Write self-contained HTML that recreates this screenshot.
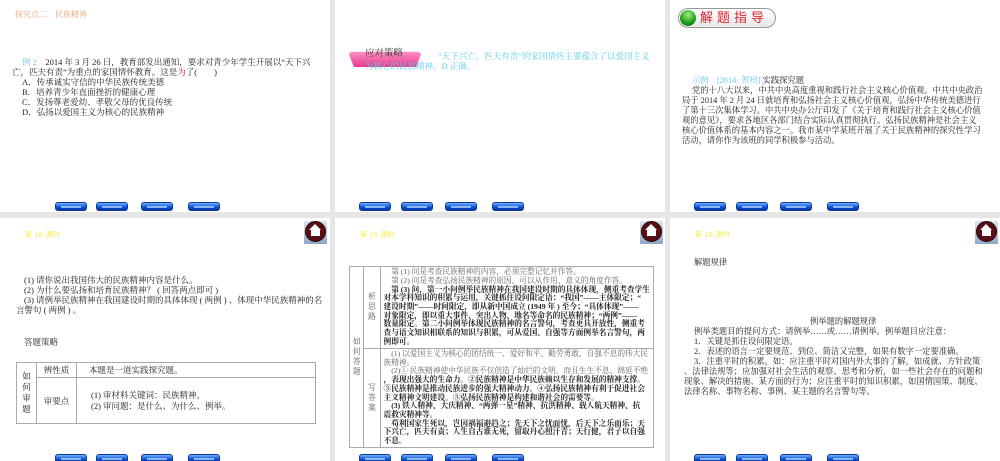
<!DOCTYPE html>
<html><head><meta charset="utf-8"><style>
*{margin:0;padding:0;box-sizing:border-box}
body{width:1000px;height:461px;background:#e6e6e6;position:relative;overflow:hidden;font-family:"Liberation Serif","Noto Serif CJK SC","Noto Sans CJK SC",serif;color:#222}
.s{position:absolute;background:#fff;overflow:hidden}
.t{position:absolute;white-space:nowrap;font-size:8.5px;line-height:9.8px}
.n .t{font-size:8.3px}
.btn{position:absolute;width:32px;height:9px;border-radius:3px;background:linear-gradient(#6fb2ff,#0a4fd6 60%,#0636a0);border:1px solid #0a3a9a}
.btn:after{content:"";position:absolute;left:5px;right:5px;top:3px;height:2px;background:#bfe0ff;opacity:.7}
.home{position:absolute;width:23px;height:23px;background:linear-gradient(#dde4ee,#8fa6c8)}
.home i{position:absolute;left:1px;top:0;width:21px;height:21px;border-radius:50%;background:#5a0f14;border:1px solid #2a0508}
.home b{position:absolute;left:7px;top:8px;width:9px;height:7px;background:#fff}
.home u{position:absolute;left:5px;top:3px;width:0;height:0;border-left:6.5px solid transparent;border-right:6.5px solid transparent;border-bottom:6px solid #fff}
.y{color:#f2ee5a;font-family:"Liberation Sans","Noto Sans CJK SC",sans-serif}
table{position:absolute;border-collapse:collapse}
td{border:1px solid #aaa;vertical-align:middle}
</style></head><body>

<!-- slide 1 -->
<div class="s" style="left:0;top:0;width:330px;height:212px">
<div class="t" style="left:15px;top:10px;color:#e8a070;font-size:8px">探究点二　民族精神</div>
<div class="t" style="left:22px;top:58px"><span style="color:#6cc8e8">例 2</span>　2014 年 3 月 26 日，教育部发出通知，要求对青少年学生开展以“天下兴</div>
<div class="t" style="left:12px;top:68px">亡，匹夫有责”为重点的家国情怀教育。这是<span style="color:#c02050">为</span>了(　　)</div>
<div class="t" style="left:22px;top:78px">A．传承诚实守信的中华民族传统美德</div>
<div class="t" style="left:22px;top:88px">B．培养青少年直面挫折的健康心理</div>
<div class="t" style="left:22px;top:98px">C．发扬尊老爱幼、孝敬父母的优良传统</div>
<div class="t" style="left:22px;top:108px">D．弘扬以爱国主义为核心的民族精神</div>
<div class="btn" style="left:55px;top:202px"></div><div class="btn" style="left:96px;top:202px"></div><div class="btn" style="left:141px;top:202px"></div><div class="btn" style="left:188px;top:202px"></div>
</div>

<!-- slide 2 -->
<div class="s" style="left:335px;top:0;width:330px;height:212px">
<div style="position:absolute;left:13px;top:50px;width:74px;height:17px;background:linear-gradient(#ff9ccc,#e83a8e);border-radius:8px 8px 3px 3px;clip-path:polygon(0 10%,100% 10%,92% 100%,8% 100%)"></div>
<div class="t" style="left:30px;top:50px;color:#333;font-size:9.5px">应对策略</div>
<div class="t" style="left:103px;top:52px;color:#5ccfe8">“天下兴亡，匹夫有责”的家国情怀主要蕴含了以爱国主义</div>
<div class="t" style="left:30px;top:62px;color:#5ccfe8">为核心的民族精神。D 正确。</div>
<div class="btn" style="left:24px;top:202px"></div><div class="btn" style="left:66px;top:202px"></div><div class="btn" style="left:110px;top:202px"></div><div class="btn" style="left:157px;top:202px"></div>
</div>

<!-- slide 3 -->
<div class="s n" style="left:670px;top:0;width:330px;height:212px">
<div style="position:absolute;left:8px;top:8px;width:98px;height:20px;border-radius:10px;background:linear-gradient(#fff,#e8e8e8);border:1px solid #999"></div>
<div style="position:absolute;left:10px;top:10px;width:16px;height:16px;border-radius:50%;background:radial-gradient(circle at 50% 30%,#9ef07a,#1a9a1a 60%,#0a6a0a)"></div>
<div class="t" style="left:30px;top:9px;color:#e0202a;font-size:13px;line-height:18px;letter-spacing:4px;font-family:'Liberation Sans','Noto Sans CJK SC',sans-serif">解题指导</div>
<div class="t" style="left:22px;top:76px"><span style="color:#6cc8e8">示例　[2014· 贺州]</span> 实践探究题</div>
<div class="t" style="left:22px;top:86px">党的十八大以来，中共中央高度重视和践行社会主义核心价值观。中共中央政治</div>
<div class="t" style="left:12px;top:96px">局于 2014 年 2 月 24 日就培育和弘扬社会主义核心价值观，弘扬中华传统美德进行</div>
<div class="t" style="left:12px;top:106px">了第十三次集体学习。中共中央办公厅印发了《关于培育和践行社会主义核心价值</div>
<div class="t" style="left:12px;top:116px">观的意见》，要求各地区各部门结合实际认真贯彻执行。弘扬民族精神是社会主义</div>
<div class="t" style="left:12px;top:126px">核心价值体系的基本内容之一。我市某中学某班开展了关于民族精神的探究性学习</div>
<div class="t" style="left:12px;top:136px">活动，请你作为该班的同学积极参与活动。</div>
<div class="btn" style="left:24px;top:202px"></div><div class="btn" style="left:66px;top:202px"></div><div class="btn" style="left:110px;top:202px"></div><div class="btn" style="left:157px;top:202px"></div>
</div>

<!-- slide 4 -->
<div class="s" style="left:0;top:218px;width:330px;height:243px">
<div class="t y" style="left:25px;top:12px;font-size:7.5px">第 16 课时</div>
<div class="home" style="left:304px;top:3px"><i></i><u></u><b></b></div>
<div class="t" style="left:24px;top:58px">(1) 请你说出我国伟大的民族精神内容是什么。</div>
<div class="t" style="left:24px;top:68px">(2) 为什么要弘扬和培育民族精神？ ( 回答两点即可 )</div>
<div class="t" style="left:24px;top:78px">(3) 请例举民族精神在我国建设时期的具体体现 ( 两例 ) 、体现中华民族精神的名</div>
<div class="t" style="left:16px;top:88px">言警句 ( 两例 ) 。</div>
<div class="t" style="left:24px;top:120px">答题策略</div>
<table style="left:16px;top:144px;width:300px;height:62px;font-size:8.5px">
<tr style="height:15px"><td rowspan="2" style="width:20px;text-align:center;line-height:11px">如<br>何<br>审<br>题</td><td style="width:40px;text-align:center">辨性质</td><td style="padding-left:12px">本题是一道实践探究题。</td></tr>
<tr><td style="text-align:center">审要点</td><td style="padding-left:14px;line-height:11px">(1) 审材料关键词：民族精神。<br>(2) 审问题：是什么、为什么、例举。</td></tr>
</table>
<div class="btn" style="left:55px;top:236px"></div><div class="btn" style="left:96px;top:236px"></div><div class="btn" style="left:141px;top:236px"></div><div class="btn" style="left:188px;top:236px"></div>
</div>

<!-- slide 5 -->
<div class="s" style="left:335px;top:218px;width:330px;height:243px">
<div class="t y" style="left:25px;top:12px;font-size:7.5px">第 16 课时</div>
<div class="home" style="left:305px;top:3px"><i></i><u></u><b></b></div>
<table style="left:14px;top:48px;width:305px;height:182px;font-size:7.7px">
<tr><td rowspan="2" style="width:20px;text-align:center;color:#555;line-height:10px">如<br>何<br>答<br>题</td><td style="width:23px;text-align:center;color:#555;line-height:10px">析思<br>路</td>
<td style="padding:1px 3px;line-height:8.7px;white-space:nowrap;font-weight:bold">
<span style="font-weight:normal;color:#666">　第 (1) 问是考查民族精神的内容，必须完整记忆并作答。<br>　第 (2) 问是考查弘扬民族精神的原因，可以从作用、意义的角度作答。</span><br>　第 (3) 问，第一小问例举民族精神在我国建设时期的具体体现，侧重考查学生<br>对本学科知识的积累与运用，关键抓住设问限定语：“我国”——主体限定；“<br>建设时期”——时间限定，即从新中国成立 (1949 年 ) 至今；“具体体现”——<br>对象限定，即以重大事件、突出人物、地名等命名的民族精神；“两例”——<br>数量限定。第二小问例举体现民族精神的名言警句，考查更具开放性，侧重考<br>查与语文知识相联系的知识与积累，可从爱国、自强等方面例举名言警句，两<br>例即可。</td></tr>
<tr><td style="text-align:center;color:#555;line-height:10px">写答<br>案</td>
<td style="padding:1px 3px;line-height:8.7px;white-space:nowrap;font-weight:bold">
<span style="font-weight:normal;color:#666">　(1) 以爱国主义为核心的团结统一、爱好和平、勤劳勇敢、自强不息的伟大民<br>族精神。<br>　(2)① 民族精神使中华民族不仅创造了灿烂的文明，而且生生不息、绵延不绝</span><br>，表现出强大的生命力。②民族精神是中华民族赖以生存和发展的精神支撑。<br>③民族精神是推动民族进步的强大精神动力。④弘扬民族精神有利于促进社会<br>主义精神文明建设。⑤弘扬民族精神是构建和谐社会的需要等。<br>　(3) 铁人精神、大庆精神、“两弹一星”精神、抗洪精神、载人航天精神、抗<br>震救灾精神等。<br>　苟利国家生死以，岂因祸福避趋之；先天下之忧而忧，后天下之乐而乐；天<br>下兴亡，匹夫有责；人生自古谁无死，留取丹心照汗青；天行健，君子以自强<br>不息。</td></tr>
</table>
<div class="btn" style="left:24px;top:236px"></div><div class="btn" style="left:66px;top:236px"></div><div class="btn" style="left:110px;top:236px"></div><div class="btn" style="left:157px;top:236px"></div>
</div>

<!-- slide 6 -->
<div class="s n" style="left:670px;top:218px;width:330px;height:243px">
<div class="t y" style="left:25px;top:12px;font-size:7.5px">第 16 课时</div>
<div class="home" style="left:305px;top:3px"><i></i><u></u><b></b></div>
<div class="t" style="left:24px;top:40px">解题规律</div>
<div class="t" style="left:140px;top:99px">例举题的解题规律</div>
<div class="t" style="left:24px;top:109px">例举类题目的提问方式：请例举……或……请例举。例举题目应注意：</div>
<div class="t" style="left:24px;top:119px">1．关键是抓住设问限定语。</div>
<div class="t" style="left:24px;top:129px">2．表述的语言一定要规范、到位、简洁又完整，如果有数字一定要准确。</div>
<div class="t" style="left:24px;top:139px">3．注重平时的积累。如：应注重平时对国内外大事的了解，如成就、方针政策</div>
<div class="t" style="left:14px;top:149px">、法律法规等；应加强对社会生活的观察、思考和分析，如一些社会存在的问题和</div>
<div class="t" style="left:14px;top:159px">现象、解决的措施、某方面的行为；应注重平时的知识积累，如国情国策、制度、</div>
<div class="t" style="left:14px;top:169px">法律名称、事物名称、事例、某主题的名言警句等。</div>
<div class="btn" style="left:24px;top:236px"></div><div class="btn" style="left:66px;top:236px"></div><div class="btn" style="left:110px;top:236px"></div><div class="btn" style="left:157px;top:236px"></div>
</div>

</body></html>
